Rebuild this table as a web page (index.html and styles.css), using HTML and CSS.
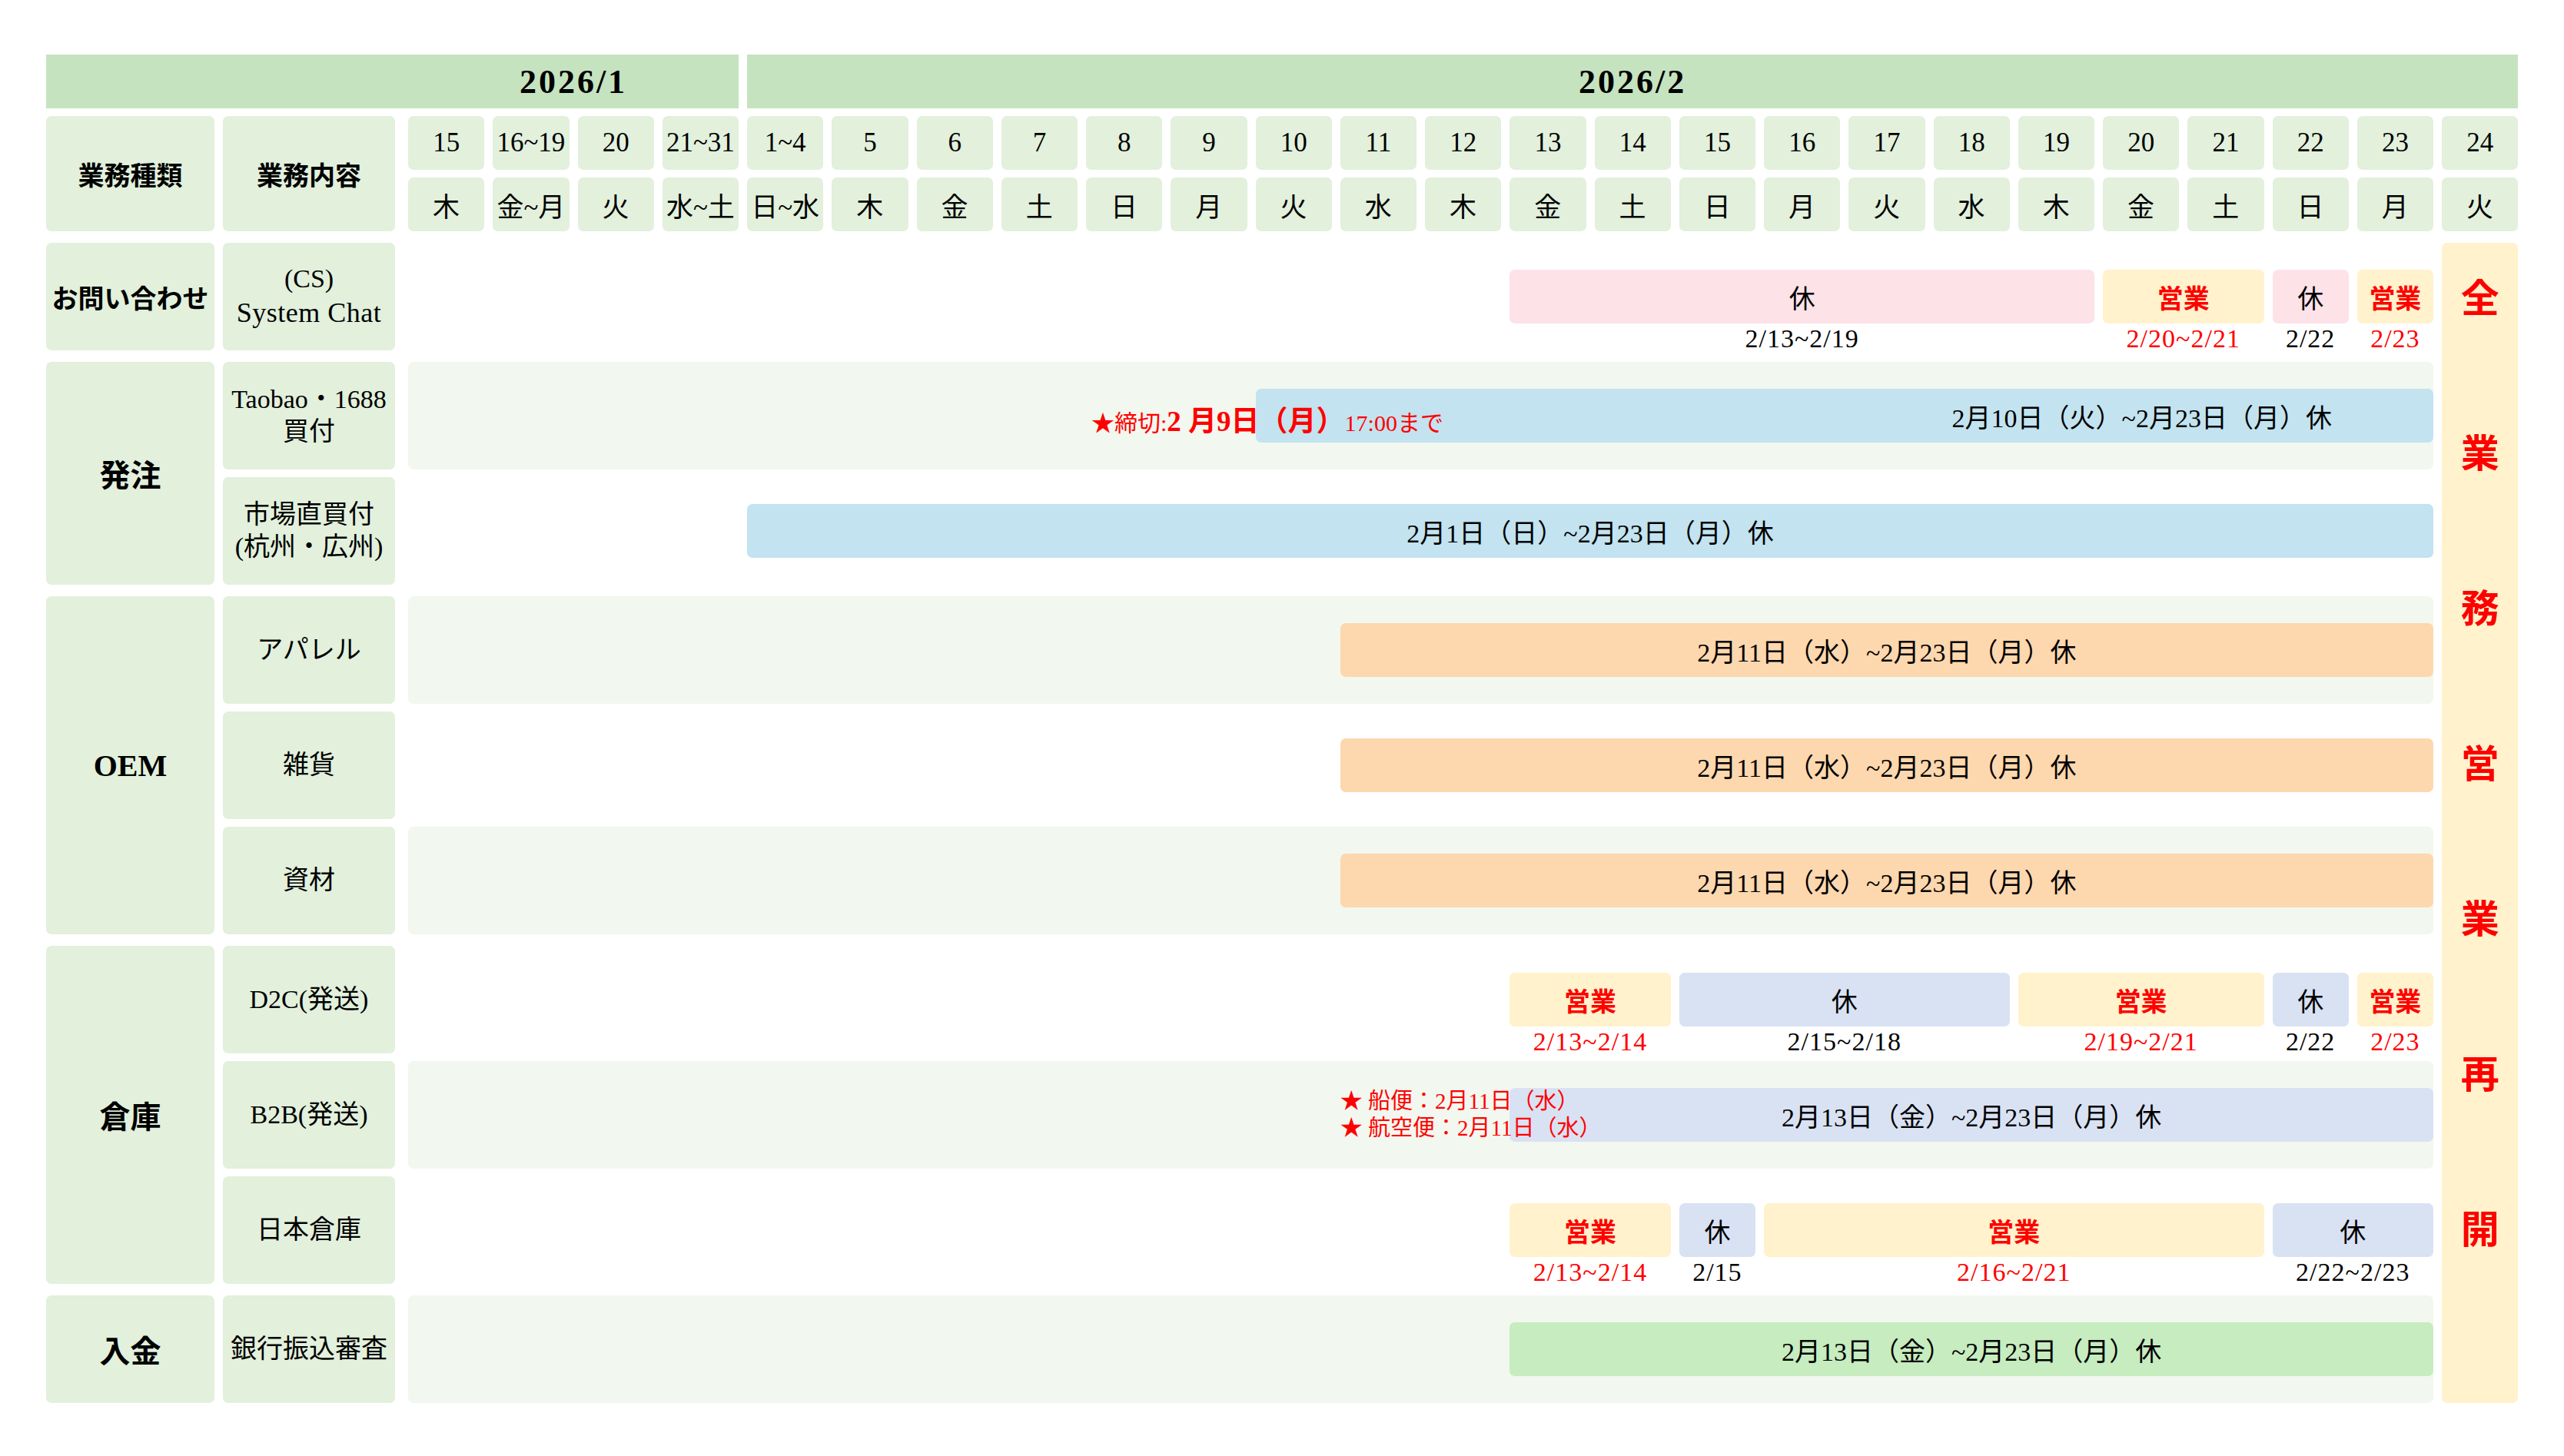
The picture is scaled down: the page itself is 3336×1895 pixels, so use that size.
FILE: index.html
```html
<!DOCTYPE html>
<html lang="ja">
<head>
<meta charset="utf-8">
<title>2026 春節 営業スケジュール</title>
<link rel="stylesheet" href="styles.css">
</head>
<body>
<div class="page">
  <div class="sheet">
    <div class="month jan">2026/1</div>
    <div class="month feb">2026/2</div>

    <div class="cell head kind">業務種類</div>
    <div class="cell head content">業務内容</div>

    <div class="cell day">15</div>
    <div class="cell day">16~19</div>
    <div class="cell day">20</div>
    <div class="cell day">21~31</div>
    <div class="cell day">1~4</div>
    <div class="cell day">5</div>
    <div class="cell day">6</div>
    <div class="cell day">7</div>
    <div class="cell day">8</div>
    <div class="cell day">9</div>
    <div class="cell day">10</div>
    <div class="cell day">11</div>
    <div class="cell day">12</div>
    <div class="cell day">13</div>
    <div class="cell day">14</div>
    <div class="cell day">15</div>
    <div class="cell day">16</div>
    <div class="cell day">17</div>
    <div class="cell day">18</div>
    <div class="cell day">19</div>
    <div class="cell day">20</div>
    <div class="cell day">21</div>
    <div class="cell day">22</div>
    <div class="cell day">23</div>
    <div class="cell day">24</div>

    <div class="cell wd">木</div>
    <div class="cell wd">金~月</div>
    <div class="cell wd">火</div>
    <div class="cell wd">水~土</div>
    <div class="cell wd">日~水</div>
    <div class="cell wd">木</div>
    <div class="cell wd">金</div>
    <div class="cell wd">土</div>
    <div class="cell wd">日</div>
    <div class="cell wd">月</div>
    <div class="cell wd">火</div>
    <div class="cell wd">水</div>
    <div class="cell wd">木</div>
    <div class="cell wd">金</div>
    <div class="cell wd">土</div>
    <div class="cell wd">日</div>
    <div class="cell wd">月</div>
    <div class="cell wd">火</div>
    <div class="cell wd">水</div>
    <div class="cell wd">木</div>
    <div class="cell wd">金</div>
    <div class="cell wd">土</div>
    <div class="cell wd">日</div>
    <div class="cell wd">月</div>
    <div class="cell wd">火</div>

    <!-- お問い合わせ -->
    <div class="cell group small gs r-cs">お問い合わせ</div>
    <div class="cell sub gs"><span>(CS)</span><span class="lat">System Chat</span></div>
    <div class="track gs">
      <div class="bar pink" style="grid-column: 14 / 21">休</div>
      <div class="bar gold" style="grid-column: 21 / 23">営業</div>
      <div class="bar pink" style="grid-column: 23 / 24">休</div>
      <div class="bar gold" style="grid-column: 24 / 25">営業</div>
      <div class="dl" style="grid-column: 14 / 21">2/13~2/19</div>
      <div class="dl red" style="grid-column: 21 / 23">2/20~2/21</div>
      <div class="dl" style="grid-column: 23 / 24">2/22</div>
      <div class="dl red" style="grid-column: 24 / 25">2/23</div>
    </div>

    <!-- 発注 -->
    <div class="cell group gs r-order">発注</div>
    <div class="cell sub gs"><span>Taobao・1688<br>買付</span></div>
    <div class="track shade gs">
      <div class="bar sky offset" style="grid-column: 11 / 25">2月10日（火）~2月23日（月）休</div>
      <div class="note deadline" style="grid-column: 9 / span 6"><span class="n-s">★締切:</span><span class="n-b">2 月9日（月）</span><span class="n-s">17:00まで</span></div>
    </div>

    <div class="cell sub"><span>市場直買付<br>(杭州・広州)</span></div>
    <div class="track">
      <div class="bar sky" style="grid-column: 5 / 25">2月1日（日）~2月23日（月）休</div>
    </div>

    <!-- OEM -->
    <div class="cell group gs r-oem">OEM</div>
    <div class="cell sub gs">アパレル</div>
    <div class="track shade gs">
      <div class="bar peach" style="grid-column: 12 / 25">2月11日（水）~2月23日（月）休</div>
    </div>

    <div class="cell sub">雑貨</div>
    <div class="track">
      <div class="bar peach" style="grid-column: 12 / 25">2月11日（水）~2月23日（月）休</div>
    </div>

    <div class="cell sub">資材</div>
    <div class="track shade">
      <div class="bar peach" style="grid-column: 12 / 25">2月11日（水）~2月23日（月）休</div>
    </div>

    <!-- 倉庫 -->
    <div class="cell group gs r-wh">倉庫</div>
    <div class="cell sub gs">D2C(発送)</div>
    <div class="track gs">
      <div class="bar gold" style="grid-column: 14 / 16">営業</div>
      <div class="bar slate" style="grid-column: 16 / 20">休</div>
      <div class="bar gold" style="grid-column: 20 / 23">営業</div>
      <div class="bar slate" style="grid-column: 23 / 24">休</div>
      <div class="bar gold" style="grid-column: 24 / 25">営業</div>
      <div class="dl red" style="grid-column: 14 / 16">2/13~2/14</div>
      <div class="dl" style="grid-column: 16 / 20">2/15~2/18</div>
      <div class="dl red" style="grid-column: 20 / 23">2/19~2/21</div>
      <div class="dl" style="grid-column: 23 / 24">2/22</div>
      <div class="dl red" style="grid-column: 24 / 25">2/23</div>
    </div>

    <div class="cell sub">B2B(発送)</div>
    <div class="track shade">
      <div class="bar slate" style="grid-column: 14 / 25">2月13日（金）~2月23日（月）休</div>
      <div class="note ship" style="grid-column: 12 / span 5">★ 船便：2月11日（水）<br>★ 航空便：2月11日（水）</div>
    </div>

    <div class="cell sub">日本倉庫</div>
    <div class="track">
      <div class="bar gold" style="grid-column: 14 / 16">営業</div>
      <div class="bar slate" style="grid-column: 16 / 17">休</div>
      <div class="bar gold" style="grid-column: 17 / 23">営業</div>
      <div class="bar slate" style="grid-column: 23 / 25">休</div>
      <div class="dl red" style="grid-column: 14 / 16">2/13~2/14</div>
      <div class="dl" style="grid-column: 16 / 17">2/15</div>
      <div class="dl red" style="grid-column: 17 / 23">2/16~2/21</div>
      <div class="dl" style="grid-column: 23 / 25">2/22~2/23</div>
    </div>

    <!-- 入金 -->
    <div class="cell group gs r-pay">入金</div>
    <div class="cell sub gs">銀行振込審査</div>
    <div class="track shade gs">
      <div class="bar mint" style="grid-column: 14 / 25">2月13日（金）~2月23日（月）休</div>
    </div>

    <div class="resume">
      <span>全</span><span>業</span><span>務</span><span>営</span><span>業</span><span>再</span><span>開</span>
    </div>
  </div>
</div>
</body>
</html>
```

FILE: styles.css
```css
* {
  box-sizing: border-box;
}

html,
body {
  margin: 0;
  background: #ffffff;
}

body {
  font-family: "Liberation Serif", "Noto Sans CJK JP", serif;
  color: #000000;
}

.page {
  width: 3336px;
  height: 1895px;
  padding: 71px 0 0 60px;
}

.sheet {
  display: grid;
  grid-template-columns: 219px 230px repeat(25, 99.25px);
  grid-template-rows: 70px 70px 70px 145px 145px 140px 145px 140px 140px 145px 140px 140px 145px;
  column-gap: 11px;
  row-gap: 10px;
}

/* month bands */
.month {
  background: #c5e3bf;
  display: flex;
  align-items: center;
  justify-content: center;
  font-size: 44px;
  font-weight: 700;
  letter-spacing: 3px;
}

.jan {
  grid-row: 1;
  grid-column: 1 / 7;
  padding-left: 471px;
}

.feb {
  grid-row: 1;
  grid-column: 7 / 28;
}

/* generic cells */
.cell {
  background: #e2f0dc;
  border-radius: 7px;
  display: flex;
  align-items: center;
  justify-content: center;
  text-align: center;
}

.head {
  grid-row: 2 / 4;
  font-size: 34px;
  font-weight: 700;
}

.kind {
  grid-column: 1;
}

.content {
  grid-column: 2;
  width: 224px;
}

.day,
.wd {
  font-size: 35px;
}

.group {
  grid-column: 1;
  font-size: 40px;
  font-weight: 700;
}

.group.small {
  font-size: 34px;
}

.r-cs { grid-row: 4 / 5; }
.r-order { grid-row: 5 / 7; }
.r-oem { grid-row: 7 / 10; }
.r-wh { grid-row: 10 / 13; }
.r-pay { grid-row: 13 / 14; }

.sub {
  grid-column: 2;
  width: 224px;
  flex-direction: column;
  font-size: 34px;
  line-height: 1.25;
}

.lat {
  font-size: 36px;
  letter-spacing: 0.5px;
}

.gs {
  margin-top: 5px;
}

/* timeline rows */
.track {
  grid-column: 3 / 27;
  display: grid;
  grid-template-columns: repeat(24, 99.25px);
  grid-template-rows: 70px 35px;
  column-gap: 11px;
  align-content: start;
  padding-top: 35px;
  border-radius: 7px;
}

.shade {
  background: #f2f7ef;
}

.bar {
  grid-row: 1;
  border-radius: 7px;
  display: flex;
  align-items: center;
  justify-content: center;
  font-size: 34px;
  white-space: nowrap;
}

.offset {
  padding-left: 774px;
}

.pink { background: #fde2e8; }
.gold { background: #fff2cc; color: #ff0000; font-weight: 700; }
.sky { background: #c2e3ef; }
.peach { background: #fdd7ae; }
.slate { background: #d9e2f3; }
.mint { background: #c6ecbf; }

.dl {
  grid-row: 2;
  text-align: center;
  font-size: 34px;
  letter-spacing: 1px;
  line-height: 35px;
  padding-top: 2px;
  white-space: nowrap;
}

.red {
  color: #ff0000;
}

.note {
  grid-row: 1;
  align-self: center;
  color: #ff0000;
  white-space: nowrap;
}

.deadline {
  margin-left: 7px;
  margin-top: 8px;
}

.n-s {
  font-size: 30px;
}

.n-b {
  font-size: 37px;
  font-weight: 700;
}

.ship {
  font-size: 29px;
  line-height: 35px;
}

/* resume column */
.resume {
  grid-column: 27;
  grid-row: 4 / 14;
  margin-top: 5px;
  background: #fff2cc;
  border-radius: 7px;
  display: flex;
  flex-direction: column;
  align-items: center;
  gap: 152px;
  padding-top: 48px;
  color: #ff0000;
  font-size: 50px;
  line-height: 50px;
  font-weight: 700;
}
```
